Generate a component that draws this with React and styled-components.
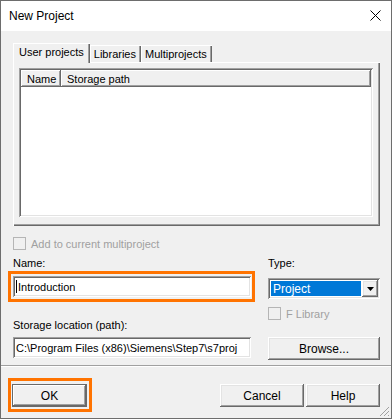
import React from 'react';
import styled, { createGlobalStyle, css } from 'styled-components';

const GlobalStyle = createGlobalStyle`
  html, body {
    margin: 0;
    padding: 0;
    background: #ffffff;
  }
  body {
    font-family: "Liberation Sans", Arial, sans-serif;
    font-size: 11px;
    color: #000000;
  }
  * {
    box-sizing: border-box;
  }
`;

// classic 3D edges
const raised = css`
  box-shadow: inset -1px -1px #696969, inset 1px 1px #ffffff,
    inset -2px -2px #a0a0a0, inset 2px 2px #e3e3e3;
`;

const sunken = css`
  box-shadow: inset 1px 1px #a0a0a0, inset -1px -1px #ffffff,
    inset 2px 2px #696969, inset -2px -2px #e3e3e3;
`;

const highlight = css`
  &::after {
    content: '';
    position: absolute;
    top: ${p => p.$hl[0]}px;
    right: ${p => p.$hl[1]}px;
    bottom: ${p => p.$hl[2]}px;
    left: ${p => p.$hl[3]}px;
    border: 3px solid #ff7300;
    pointer-events: none;
  }
`;

const Dialog = styled.div`
  position: relative;
  width: 392px;
  height: 419px;
  border: 1px solid #6d6d6d;
  background: #f0f0f0;
  display: flex;
  flex-direction: column;
`;

const TitleBar = styled.div`
  height: 30px;
  background: #ffffff;
  display: flex;
  align-items: center;
  justify-content: space-between;
  padding: 0 10px 1px 8px;
  font-size: 12px;
`;

const CloseIcon = () => (
  <svg width="11" height="11" viewBox="0 0 11 11">
    <path d="M0.5 0.5 L10.5 10.5 M10.5 0.5 L0.5 10.5" stroke="#000" strokeWidth="1" />
  </svg>
);

const Content = styled.div`
  padding: 12px 11px 0 12px;
  display: flex;
  flex-direction: column;
`;

const TabStrip = styled.div`
  display: flex;
  align-items: flex-end;
  height: 19px;
`;

const Tab = styled.div`
  position: relative;
  display: flex;
  align-items: center;
  height: ${p => (p.$active ? '20px' : '17px')};
  margin-bottom: ${p => (p.$active ? '-1px' : '0')};
  padding: ${p => (p.$active ? '0 6px 2px 6px' : '0 5px 0 4px')};
  background: #f0f0f0;
  z-index: ${p => (p.$active ? 1 : 0)};
  box-shadow: inset 1px 1px #ffffff, inset -1px 0 #696969, inset -2px 0 #a0a0a0;
  white-space: nowrap;
`;

const TabPanel = styled.div`
  height: 164px;
  padding: 6px 7px 9px 6px;
  display: flex;
  box-shadow: inset 1px 1px #ffffff, inset -1px -1px #696969, inset -2px -2px #a0a0a0;
`;

const ListView = styled.div`
  flex: 1;
  background: #ffffff;
  padding: 2px;
  ${sunken};
`;

const HeaderRow = styled.div`
  display: flex;
  height: 17px;
`;

const HeaderCell = styled.div`
  display: flex;
  align-items: center;
  width: ${p => (p.$width ? `${p.$width}px` : 'auto')};
  flex: ${p => (p.$width ? 'none' : '1')};
  padding-left: 6px;
  background: #f0f0f0;
  box-shadow: inset -1px -1px #696969, inset 1px 1px #ffffff, inset -2px -2px #a0a0a0;
`;

const CheckRow = styled.div`
  display: flex;
  align-items: center;
  gap: 5px;
  height: 13px;
  margin-top: ${p => p.$top || 0}px;
  color: #a0a0a0;
`;

const CheckBox = styled.span`
  width: 13px;
  height: 13px;
  flex: none;
  background: #f0f0f0;
  border: 1px solid #b5b5b5;
`;

const Form = styled.div`
  display: grid;
  grid-template-columns: 239px 112px;
  column-gap: 16px;
  margin-top: 7px;
`;

const Column = styled.div`
  display: flex;
  flex-direction: column;
`;

const Label = styled.div`
  height: 13px;
  line-height: 13px;
  margin-top: ${p => p.$top || 0}px;
`;

const Field = styled.div`
  position: relative;
  height: 21px;
  margin-top: ${p => p.$top || 0}px;
  margin-right: 1px;
  background: #ffffff;
  display: flex;
  align-items: center;
  padding: 0 3px 0 3px;
  white-space: nowrap;
  ${sunken};
  ${p => p.$hl && highlight};
`;

const Caret = styled.span`
  width: 1px;
  height: 13px;
  background: #000000;
  margin-right: 1px;
`;

const SelectBox = styled.div`
  height: 21px;
  margin-top: ${p => p.$top || 0}px;
  background: #ffffff;
  display: flex;
  padding: 2px;
  ${sunken};
`;

const SelectValue = styled.div`
  flex: 1;
  margin: 1px;
  background: #0078d7;
  color: #ffffff;
  display: flex;
  align-items: center;
  padding-left: 2px;
  font-size: 12px;
`;

const DropButton = styled.div`
  width: 16px;
  background: #f0f0f0;
  display: flex;
  align-items: center;
  justify-content: center;
  ${raised};
`;

const Button = styled.div`
  position: relative;
  height: 23px;
  width: ${p => p.$width}px;
  margin-top: ${p => p.$top || 0}px;
  margin-left: ${p => p.$left || 0}px;
  display: flex;
  align-items: center;
  justify-content: center;
  background: #f0f0f0;
  font-size: 12px;
  ${raised};
  ${p =>
    p.$default &&
    css`
      box-shadow: inset 0 0 0 1px #696969, inset -2px -2px #696969,
        inset 2px 2px #ffffff, inset -3px -3px #a0a0a0;
    `};
  ${p => p.$hl && highlight};
`;

const Separator = styled.div`
  height: 2px;
  margin-top: 5px;
  border-top: 1px solid #a0a0a0;
  border-bottom: 1px solid #ffffff;
`;

const Footer = styled.div`
  display: flex;
  align-items: center;
  padding: 17px 11px 0 11px;
`;

const Spacer = styled.div`
  flex: 1;
`;

const Grip = styled.svg`
  position: absolute;
  right: 1px;
  bottom: 1px;
`;

const DownArrow = () => (
  <svg width="7" height="4" viewBox="0 0 7 4">
    <path d="M0 0 H7 L3.5 4 Z" fill="#000" />
  </svg>
);

export default function App() {
  return (
    <>
      <GlobalStyle />
      <Dialog>
        <TitleBar>
          <span>New Project</span>
          <CloseIcon />
        </TitleBar>

        <Content>
          <TabStrip>
            <Tab $active>User projects</Tab>
            <Tab>Libraries</Tab>
            <Tab>Multiprojects</Tab>
          </TabStrip>
          <TabPanel>
            <ListView>
              <HeaderRow>
                <HeaderCell $width={40}>Name</HeaderCell>
                <HeaderCell>Storage path</HeaderCell>
              </HeaderRow>
            </ListView>
          </TabPanel>

          <CheckRow $top={11}>
            <CheckBox />
            <span>Add to current multiproject</span>
          </CheckRow>

          <Form>
            <Column>
              <Label>Name:</Label>
              <Field $top={6} $hl={[-5, -4, -5, -5]}>
                <Caret />
                Introduction
              </Field>
              <Label $top={22}>Storage location (path):</Label>
              <Field $top={5}>{'C:\\Program Files (x86)\\Siemens\\Step7\\s7proj'}</Field>
            </Column>
            <Column>
              <Label>Type:</Label>
              <SelectBox $top={8}>
                <SelectValue>Project</SelectValue>
                <DropButton>
                  <DownArrow />
                </DropButton>
              </SelectBox>
              <CheckRow $top={8}>
                <CheckBox />
                <span>F Library</span>
              </CheckRow>
              <Button $width={112} $top={17}>Browse...</Button>
            </Column>
          </Form>
        </Content>

        <Separator />

        <Footer>
          <Button $width={75} $default $hl={[-6, -5, -5, -4]}>OK</Button>
          <Spacer />
          <Button $width={84}>Cancel</Button>
          <Button $width={74} $left={2}>Help</Button>
        </Footer>

        <Grip width="12" height="12" viewBox="0 0 12 12">
          <path d="M11 2 L2 11 M11 6 L6 11 M11 10 L10 11" stroke="#a0a0a0" strokeWidth="1" />
        </Grip>
      </Dialog>
    </>
  );
}
